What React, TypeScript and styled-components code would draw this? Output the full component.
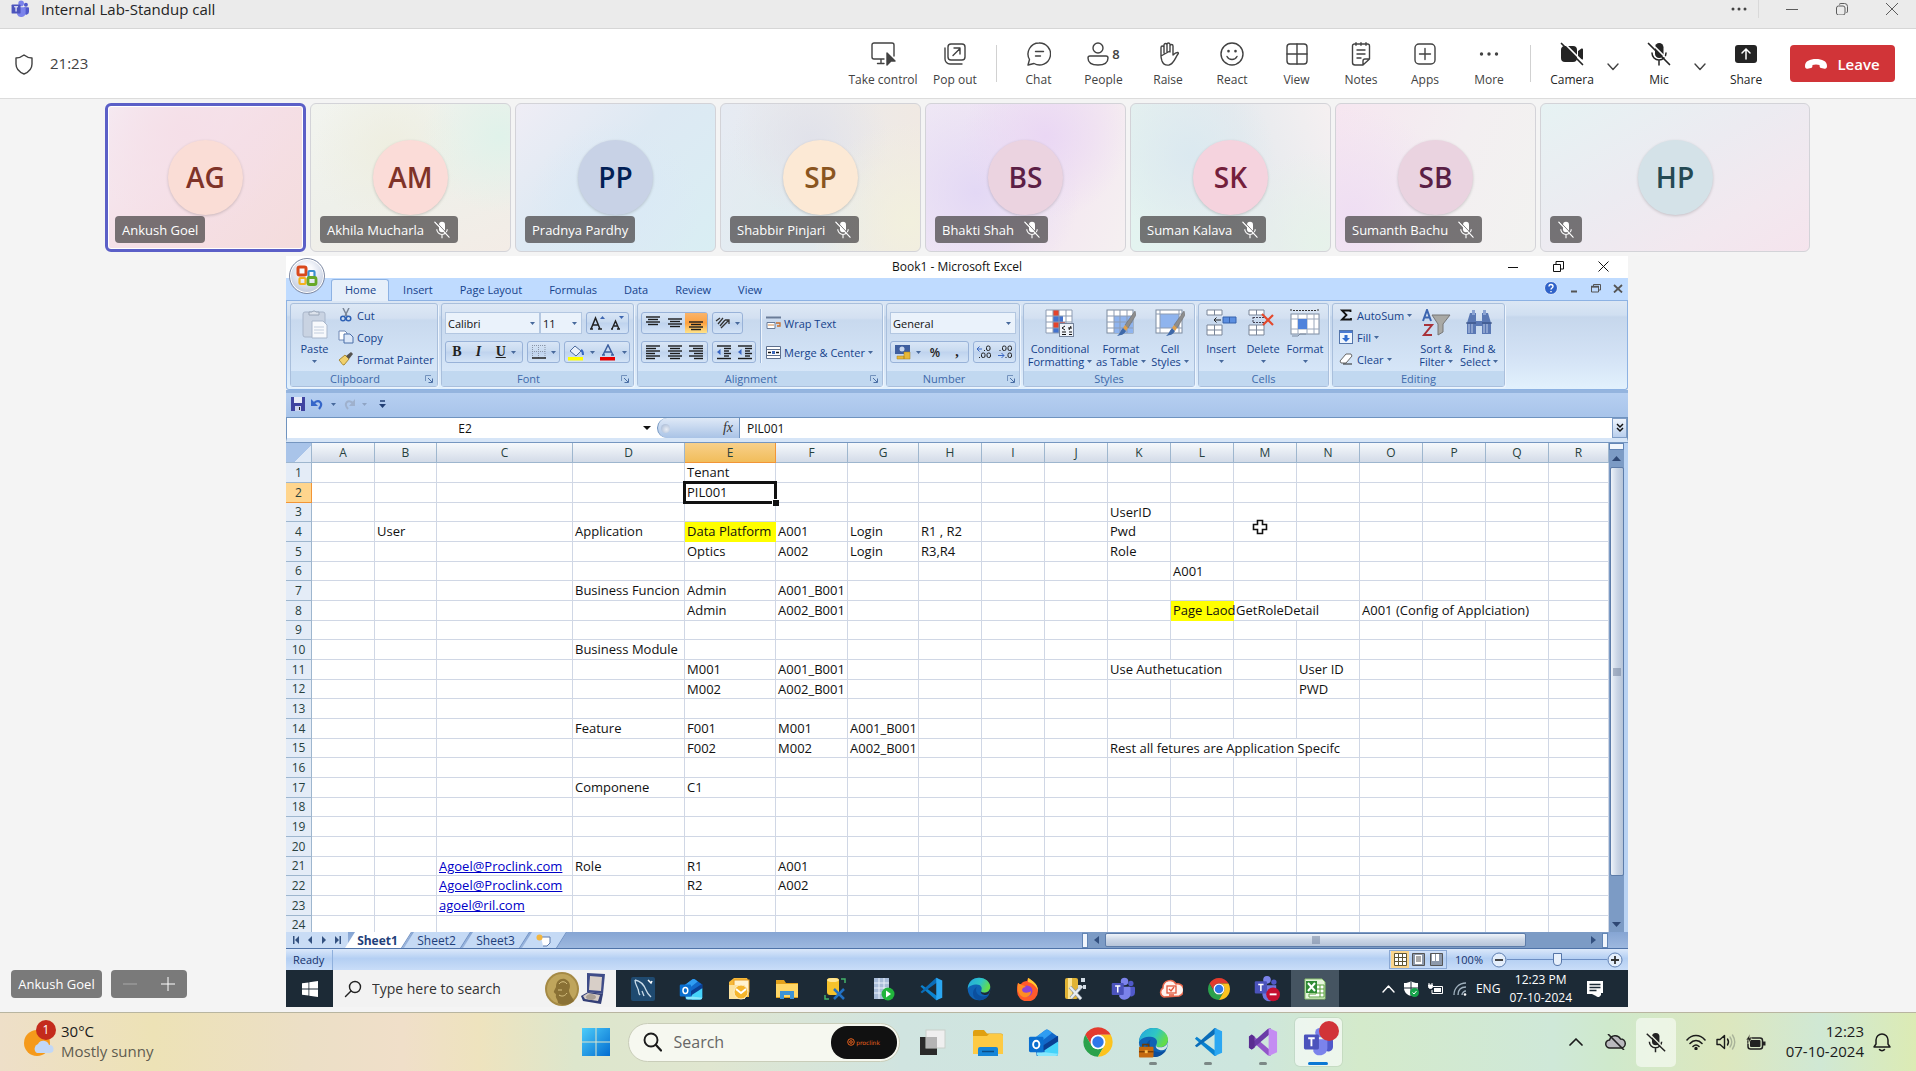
import React from "react";
import styled, { createGlobalStyle, css } from "styled-components";

const ui = `"Open Sans", "Noto Sans", sans-serif`;

const GlobalStyle = createGlobalStyle`
  * { box-sizing: border-box; }
  body { margin: 0; background: #f4f4f4; font-family: ${ui}; color: #242424; }
  button { font: inherit; color: inherit; background: none; border: 0; padding: 0; cursor: pointer; }
  input, select { font: inherit; color: inherit; border: 0; padding: 0; margin: 0; outline: none; }
  svg { display: block; flex: none; }
`;

/* ---------- helpers ---------- */

type IconProps = { w?: number; h?: number; box?: string; children: React.ReactNode };

const Svg = ({ w = 24, h, box = "0 0 24 24", children }: IconProps) => (
  <svg width={w} height={h ?? w} viewBox={box} fill="none" aria-hidden="true">
    {children}
  </svg>
);

const Line = ({ w = 24, h, box, children }: IconProps) => (
  <Svg w={w} h={h} box={box}>
    <g stroke="currentColor" strokeWidth="1.4" strokeLinecap="round" strokeLinejoin="round">
      {children}
    </g>
  </Svg>
);

/* ---------- application logos ---------- */

const TeamsLogo = ({ size }: { size: number }) => (
  <Svg w={size} box="0 0 32 32">
    <circle cx="26.5" cy="8.5" r="3.5" fill="#5059c9" />
    <circle cx="18" cy="6" r="5" fill="#7b83eb" />
    <path d="M23 13h7.500a1.500 1.500 0 0 1 1.500 1.500V21a5 5 0 0 1-9 3z" fill="#5059c9" />
    <path d="M11 13h13.500a1.500 1.500 0 0 1 1.500 1.500V23a8 8 0 0 1-15 3z" fill="#7b83eb" />
    <rect x="1" y="8" width="16" height="16" rx="1.500" fill="#4b53bc" />
    <path d="M5.500 12h7M9 12v8.500" stroke="#fff" strokeWidth="2" />
  </Svg>
);

const OutlookLogo = ({ size }: { size: number }) => (
  <Svg w={size} box="0 0 32 32">
    <path d="M6 12 18 3q1.500-1 3 0l10 7v17a3 3 0 0 1-3 3H9z" fill="#1268c9" />
    <path d="M6 12 18 3q1.500-1 3 0l4 3-14 11z" fill="#2f9df2" />
    <path d="M14 20 31 9v7L17 26z" fill="#0a3f94" />
    <path d="M31 15 17 24v6h11a3 3 0 0 0 3-3z" fill="#45d3fa" />
    <path d="M9 26h8l14 1.500a3 3 0 0 1-3 2.500H12a3 3 0 0 1-3-3z" fill="#86e7fd" />
    <rect x="1" y="10" width="15" height="16" rx="1.500" fill="#0a6fd0" />
    <ellipse cx="8.500" cy="18" rx="3.200" ry="3.900" stroke="#fff" strokeWidth="2" />
  </Svg>
);

const ChromeLogo = ({ size }: { size: number }) => (
  <Svg w={size} box="0 0 48 48">
    <path d="M4.950 13A22 22 0 0 1 43.050 13H24a11 11 0 0 0-9.500 16.500z" fill="#e33b2e" />
    <path d="M4.950 13 14.500 29.500a11 11 0 0 0 19 0L24 46A22 22 0 0 1 4.950 13z" fill="#2ba24c" />
    <path d="M43.050 13A22 22 0 0 1 24 46l9.500-16.500A11 11 0 0 0 24 13z" fill="#fcc31e" />
    <circle cx="24" cy="24" r="11" fill="#fff" />
    <circle cx="24" cy="24" r="8.500" fill="#2f77ea" />
  </Svg>
);

const EdgeLogo = ({ size, bag }: { size: number; bag?: boolean }) => (
  <Svg w={size} box="0 0 32 32">
    <defs>
      <linearGradient id="edgeTop" x1="0" y1="0" x2="1" y2="0.400">
        <stop offset="0" stopColor="#23a5e0" />
        <stop offset="0.600" stopColor="#2fc6c4" />
        <stop offset="1" stopColor="#63dc4b" />
      </linearGradient>
    </defs>
    <circle cx="16" cy="16" r="15" fill="#0f62b4" />
    <path d="M1 16C1 7 8 1 16 1c9 0 15 6 15 12 0 5-4 8-8 8-3 0-5-1-4-3 2-4-1-8-6-8C7 10 2 12 1 16z" fill="url(#edgeTop)" />
    <path d="M13 13c-3 6 1 13 9 13 3 0 5-1 7-2-3 5-8 7-13 7-9-1-11-13-3-18z" fill="#0b4f9e" />
    <path d="M19 18c-1 2 1 3 4 3 4 0 7-2 8-6 0 5-2 9-6 9-5 0-8-3-6-6z" fill={bag ? "#d3e6e4" : "#1c2a36"} />
    {bag && (
      <>
        <path d="M5 21v-3h6v3" stroke="#6d3b05" strokeWidth="1.500" />
        <rect x="1" y="20.500" width="15" height="11" rx="1" fill="#c56a10" />
        <path d="M1 25.500h15" stroke="#7b3f08" strokeWidth="1.500" />
        <rect x="7" y="24" width="3" height="3" fill="#ffc04d" />
      </>
    )}
  </Svg>
);

const CodeLogo = ({ size }: { size: number }) => (
  <Svg w={size} box="0 0 32 32">
    <path d="M2 12.500 4 10.500 25 26v4.500L23 31z" fill="#0b83d0" />
    <path d="M2 20 4 21.500 25 6.500V1.500L23 1z" fill="#0a6cb8" />
    <path d="m23 1 8 3.500v23L23 31z" fill="#2ba7f2" />
  </Svg>
);

const VisualStudioLogo = ({ size }: { size: number }) => (
  <Svg w={size} box="0 0 32 32">
    <path d="M1 10 4 8l20 17v6l-3-1L1 12z" fill="#9256c9" />
    <path d="M1 22 4 24 24 7V1l-3 1L1 20z" fill="#6a3ba7" />
    <path d="M1 10 4 8l3 2v12l-3 2-3-2z" fill="#5a2d91" />
    <path d="m22 1 9 4v22l-9 4z" fill="#c48cf2" />
  </Svg>
);

const FolderLogo = ({ size }: { size: number }) => (
  <Svg w={size} box="0 0 32 32">
    <path d="M1 6a2 2 0 0 1 2-2h9l3 3.500h14a2 2 0 0 1 2 2V15H1z" fill="#e0a010" />
    <path d="M1 10h14l2-2h12a2 2 0 0 1 2 2v18H1z" fill="#fdca44" />
    <path d="M6 30v-7a2 2 0 0 1 2-2h16a2 2 0 0 1 2 2v7z" fill="#1585d8" />
    <path d="M10 25.500h12" stroke="#0b4d87" strokeWidth="1.500" />
  </Svg>
);

const SmallFolder = () => (
  <Svg w={24} box="0 0 24 24">
    <path d="M1 3h8l2 3h12v15H1z" fill="#e3a21c" />
    <path d="M1 7h22v13H1z" fill="#ffd767" />
    <path d="M5 22v-8h14v8h-4v-4H9v4z" fill="#3d93d6" />
  </Svg>
);

const MySqlLogo = () => (
  <Svg w={24} box="0 0 24 24">
    <rect width="24" height="24" rx="2" fill="#1f4a70" />
    <path d="M4 3c6 1 9 5 11 10 1 3 3 5 5 7M4 3c0 4 2 6 3 9 1 2 0 4 2 6M11 14l2 5" stroke="#c9dbe8" strokeWidth="1.300" />
    <path d="m17 3 3 3 1-2" stroke="#fff" strokeWidth="1.500" />
  </Svg>
);

const MailClockLogo = () => (
  <Svg w={24} box="0 0 24 24">
    <path d="M2 5 7 1h13l2 4v15H2z" fill="#f6b93a" />
    <rect x="7" y="3" width="15" height="12" fill="#fff3d0" stroke="#e79c1f" />
    <path d="M2 8h16v14H2z" fill="#fce3a0" />
    <circle cx="14" cy="15" r="7" fill="#f5b52c" stroke="#fff0c8" />
    <path d="m9 12 5 4 5-4" stroke="#fff" strokeWidth="2" />
  </Svg>
);

const DbToolLogo = () => (
  <Svg w={24} box="0 0 24 24">
    <rect x="4" y="1" width="12" height="17" rx="3" fill="#f6c22c" />
    <ellipse cx="10" cy="3" rx="6" ry="2" fill="#ffe694" />
    <path d="M18 2h4v4M2 18v4h4" stroke="#43b36a" strokeWidth="1.500" />
    <path d="m11 12 10 10M21 12 11 22" stroke="#2271c4" strokeWidth="2.500" />
  </Svg>
);

const ServerPlayLogo = () => (
  <Svg w={24} box="0 0 24 24">
    <rect x="3" y="1" width="15" height="21" fill="#a8bcd8" />
    <path d="M3 6h15M3 11h15M3 16h15M8 1v21M13 1v21" stroke="#eaf1fa" />
    <circle cx="17" cy="17" r="6.500" fill="#21b53c" />
    <path d="m15 13.500 5 3.500-5 3.500z" fill="#fff" />
  </Svg>
);

const FirefoxLogo = () => (
  <Svg w={24} box="0 0 24 24">
    <path d="M3 6c1 1 2 1 3 1 1-2 4-3 6-3l1-3c4 2 10 6 10 13a10.500 10.500 0 0 1-21 0c0-3 0-5 1-8z" fill="#ff5a2c" />
    <path d="M13 1c4 2 10 6 10 13-1-4-5-8-10-9z" fill="#ffcc2f" />
    <circle cx="12" cy="14" r="5.500" fill="#8d41d8" />
    <path d="M3 6c2 2 6 2 8 4-2 0-4 1-4 3 1 4 7 3 9 1 0 5-4 7-8 6-5-2-6-8-5-14z" fill="#ff8d24" />
  </Svg>
);

const DbWrenchLogo = () => (
  <Svg w={24} box="0 0 24 24">
    <rect x="2" y="1" width="13" height="21" rx="2" fill="#e0b335" />
    <rect x="5" y="1" width="4" height="21" fill="#fbe391" />
    <path d="m7 10 11 12M19 9 8 21" stroke="#8d9aa8" strokeWidth="3.500" />
    <path d="m7 10 11 12M19 9 8 21" stroke="#e8edf2" strokeWidth="2.200" />
    <path d="M18 1h4v4h-4zM15 8h3v4h-3zM20 8h3v4h-3z" fill="#d3dde6" />
  </Svg>
);

const CloudCheckLogo = () => (
  <Svg w={24} box="0 0 24 24">
    <path d="M5 20a5 5 0 0 1-1-9 7 7 0 0 1 13-4 6 6 0 0 1 3 12z" fill="#fff4f0" stroke="#e7674c" strokeWidth="1.500" />
    <rect x="8" y="9" width="9" height="7" stroke="#e0563b" strokeWidth="1.300" />
    <path d="m10 12 2 2 3-4M10 18h5" stroke="#e0563b" strokeWidth="1.300" />
  </Svg>
);

const TeamsBusyLogo = () => (
  <Svg w={26} box="0 0 34 34">
    <circle cx="26" cy="8" r="3.500" fill="#5059c9" />
    <circle cx="17" cy="5" r="5" fill="#7b83eb" />
    <path d="M11 12h18v11a8 8 0 0 1-18 2z" fill="#6f77de" />
    <rect x="1" y="7" width="16" height="16" rx="1.500" fill="#4b53bc" />
    <path d="M5.500 11h7M9 11v8.500" stroke="#fff" strokeWidth="2" />
    <circle cx="25" cy="24" r="9" fill="#c50f2f" />
    <path d="M20.500 24h9" stroke="#fff" strokeWidth="2.500" />
  </Svg>
);

const ExcelLogo = () => (
  <Svg w={24} box="0 0 24 24">
    <path d="M2 2h17l3 3v17H2z" fill="#e5f4dc" stroke="#8cc56f" />
    <path d="M13 8h8v12H6v-3h7z" fill="#fff" stroke="#5aa23f" />
    <path d="M13 12h8M13 16h8M17 8v12" stroke="#5aa23f" />
    <rect x="3" y="4" width="11" height="12" fill="#2f8b35" />
    <path d="m5 6 7 8M12 6l-7 8" stroke="#fff" strokeWidth="2" />
  </Svg>
);

const WindowsTen = () => (
  <Svg w={16} box="0 0 16 16">
    <path d="M0 2.300 6.500 1.400v6.200H0zM7.300 1.300 16 0v7.600H7.300zM0 8.400h6.500v6.200L0 13.700zM7.300 8.400H16V16l-8.700-1.300z" fill="#fff" />
  </Svg>
);

const WindowsEleven = () => (
  <Svg w={30} box="0 0 30 30">
    <defs>
      <linearGradient id="winBlue" x1="0" y1="0" x2="30" y2="30" gradientUnits="userSpaceOnUse">
        <stop offset="0" stopColor="#4fd0fb" />
        <stop offset="1" stopColor="#0069cf" />
      </linearGradient>
    </defs>
    <path d="M1 1h13.500v13.500H1zM15.500 1H29v13.500H15.500zM1 15.500h13.500V29H1zM15.500 15.500H29V29H15.500z" fill="url(#winBlue)" />
  </Svg>
);

/* ---------- call window: title and toolbar ---------- */

const Page = styled.div`
  display: flex;
  flex-direction: column;
  min-height: 100vh;
`;

const TitleBar = styled.header`
  display: flex;
  align-items: center;
  height: 29px;
  padding: 0 18px 10px 11px;
  gap: 12px;
  background: #ebebeb;
  border-bottom: 1px solid #d6d6d6;
  font-size: 15px;
  line-height: 18px;
  h1 { flex: 1; margin: 0; font-size: 15px; font-weight: 400; }
`;

const WindowButtons = styled.div<{ $gap: number }>`
  display: flex;
  align-items: center;
  gap: ${(p) => p.$gap}px;
  color: #5c5c5c;
`;

const TitleRule = styled.span`
  width: 1px;
  height: 18px;
  margin: 0 -11px 0 -28px;
  background: #d9d9d9;
`;

const CallBar = styled.div`
  display: flex;
  align-items: center;
  height: 70px;
  padding: 0 21px 0 14px;
  background: #fff;
  border-bottom: 1px solid #dcdcdc;
  color: #424242;
`;

const Timer = styled.time`
  flex: 1;
  margin-left: 16px;
  padding-bottom: 2px;
  font-size: 15px;
`;

const ToolButton = styled.button<{ $w?: number; $dark?: boolean }>`
  display: flex;
  flex-direction: column;
  align-items: center;
  gap: 6px;
  width: ${(p) => p.$w ?? 64}px;
  padding-top: 2px;
  font-size: 12px;
  line-height: 16px;
  white-space: nowrap;
  color: ${(p) => (p.$dark ? "#242424" : "#424242")};
  sup { margin-left: 3px; font-size: 13px; line-height: 24px; font-weight: 600; vertical-align: top; }
  span { display: flex; }
`;

const ChevronButton = styled.button`
  display: flex;
  justify-content: center;
  width: 18px;
  margin-right: 5px;
  color: #424242;
`;

const BarRule = styled.span`
  width: 1px;
  height: 37px;
  margin: 0 9px;
  background: #d1d1d1;
`;

const LeaveButton = styled.button`
  display: flex;
  align-items: center;
  justify-content: center;
  gap: 10px;
  width: 105px;
  height: 37px;
  margin-left: 12px;
  border-radius: 4px;
  background: #d13438;
  color: #fff;
  font-size: 15px;
  font-weight: 600;
`;

const icons = {
  control: (
    <Line w={26} h={24} box="0 0 26 24">
      <path d="M14 17H4a2 2 0 0 1-2-2V3a2 2 0 0 1 2-2h18a2 2 0 0 1 2 2v11M11 17v4M7.500 21.500H14" />
      <path d="m17 11 8 8h-4l-4 4z" fill="currentColor" />
    </Line>
  ),
  popOut: (
    <Line>
      <rect x="5" y="2" width="17" height="16" rx="3" />
      <path d="M2 6v11a5 5 0 0 0 5 5h12M10 13.500l7-7M11 6h6v6" />
    </Line>
  ),
  chat: (
    <Line>
      <path d="M12 1a11 11 0 1 1-5 20.500L1 23l1.500-5.500A11 11 0 0 1 12 1zM8.500 9.500h8M8.500 14h5" />
    </Line>
  ),
  person: (
    <Line w={22} h={24} box="0 0 22 24">
      <circle cx="11" cy="6" r="5" />
      <path d="M3 14h16a2 2 0 0 1 2 2c0 5-4 7-10 7S1 21 1 16a2 2 0 0 1 2-2z" />
    </Line>
  ),
  hand: (
    <Line>
      <path d="M5 14V5.500a1.500 1.500 0 0 1 3 0V11M8 9V3a1.500 1.500 0 0 1 3 0v7M11 9V2.500a1.500 1.500 0 0 1 3 0V10M14 9V4a1.500 1.500 0 0 1 3 0v9c2-2 3-3 5-2.500.500.300.500 1 0 1.500-3 4-4 10-9 11-4 .500-6-1-7-4-.500-2-1-3-1-5z" />
    </Line>
  ),
  smile: (
    <Line>
      <circle cx="12" cy="12" r="11" />
      <path d="M7 14.500c2 4 8 4 10 0" />
      <path d="M8.500 9v.300M15.500 9v.300" strokeWidth="2.600" />
    </Line>
  ),
  view: (
    <Line>
      <rect x="2" y="2" width="20" height="20" rx="3" />
      <path d="M12 2v20M2 12h20" />
    </Line>
  ),
  notes: (
    <Line>
      <path d="M14 23H6a2.500 2.500 0 0 1-2.500-2.500V4A2 2 0 0 1 5.500 2h13a2 2 0 0 1 2 2v13zM14 23v-4a2 2 0 0 1 2-2h4.500M7 .800v2.400M12 .800v2.400M17 .800v2.400M8 8h8M8 12h8M8 16h4" />
    </Line>
  ),
  apps: (
    <Line>
      <rect x="2" y="2" width="20" height="20" rx="4" />
      <path d="M12 6.500v11M6.500 12h11" />
    </Line>
  ),
  more: (
    <Svg>
      <g fill="currentColor">
        <circle cx="4.500" cy="12" r="1.700" />
        <circle cx="12" cy="12" r="1.700" />
        <circle cx="19.500" cy="12" r="1.700" />
      </g>
    </Svg>
  ),
  camera: (
    <Svg>
      <path d="M4 4h9a4 4 0 0 1 4 4v8a4 4 0 0 1-4 4H5a4 4 0 0 1-4-4V8a4 4 0 0 1 3-4zM18 9l3.500-2.500q1.500-.500 1.500 1v9q0 1.500-1.500 1L18 15z" fill="currentColor" />
      <path d="m3 0 21 21" stroke="#fff" strokeWidth="1.600" />
      <path d="m1.500 1.500 21 21" stroke="currentColor" strokeWidth="1.700" strokeLinecap="round" />
    </Svg>
  ),
  mic: (
    <Svg>
      <rect x="8" y="1" width="8.500" height="15" rx="4.250" fill="currentColor" />
      <path d="M5 11a7 7 0 0 0 14 0M12 18.500V23" stroke="currentColor" strokeWidth="1.500" strokeLinecap="round" />
      <path d="m3 0 21 21" stroke="#fff" strokeWidth="1.600" />
      <path d="m1.500 1.500 21 21" stroke="currentColor" strokeWidth="1.700" strokeLinecap="round" />
    </Svg>
  ),
  share: (
    <Svg>
      <rect x="1" y="3" width="22" height="18" rx="3" fill="currentColor" />
      <path d="M12 17V7.500M8 11l4-4 4 4" stroke="#fff" strokeWidth="1.500" strokeLinecap="round" />
    </Svg>
  ),
};

const Chevron = () => (
  <Line w={12} h={20} box="0 0 12 20">
    <path d="m1 10 5 5.500L11 10" />
  </Line>
);

const CallToolbar = () => (
  <CallBar>
    <Line w={20} h={22} box="0 0 20 22">
      <path d="M10 2c2.500 2 5 3 8 3v6c0 5-3 8-8 10-5-2-8-5-8-10V5c3 0 5.500-1 8-3z" />
    </Line>
    <Timer>21:23</Timer>
    <ToolButton $w={80}>{icons.control}Take control</ToolButton>
    <ToolButton>{icons.popOut}Pop out</ToolButton>
    <BarRule />
    <ToolButton $w={65}>{icons.chat}Chat</ToolButton>
    <ToolButton $w={65}><span>{icons.person}<sup>8</sup></span>People</ToolButton>
    <ToolButton>{icons.hand}Raise</ToolButton>
    <ToolButton>{icons.smile}React</ToolButton>
    <ToolButton $w={65}>{icons.view}View</ToolButton>
    <ToolButton>{icons.notes}Notes</ToolButton>
    <ToolButton>{icons.apps}Apps</ToolButton>
    <ToolButton>{icons.more}More</ToolButton>
    <BarRule />
    <ToolButton $dark>{icons.camera}Camera</ToolButton>
    <ChevronButton aria-label="Camera options"><Chevron /></ChevronButton>
    <ToolButton $dark>{icons.mic}Mic</ToolButton>
    <ChevronButton aria-label="Mic options"><Chevron /></ChevronButton>
    <ToolButton $dark>{icons.share}Share</ToolButton>
    <LeaveButton>
      <Svg w={22} h={12} box="0 0 22 12">
        <path d="M0 8C0 3 5 1 11 1s11 2 11 7c0 2-1 3-2.500 2.700L16 10c-1-.300-1.500-1-1.500-3-2-.800-5-.800-7 0C7.500 9 7 9.700 6 10l-3.500.700C1 11 0 10 0 8z" fill="#fff" />
      </Svg>
      Leave
    </LeaveButton>
  </CallBar>
);

/* ---------- participants ---------- */

const Gallery = styled.section`
  display: flex;
  justify-content: center;
  gap: 4px;
  padding: 4px 1px 4px 0;
`;

const Tile = styled.article<{ $wide?: boolean; $active?: boolean; $bg: string }>`
  display: grid;
  place-items: center;
  position: relative;
  width: ${(p) => (p.$wide ? 270 : 201)}px;
  height: 149px;
  border: ${(p) => (p.$active ? "3px solid #5b5fc7" : "1px solid #d3d3d8")};
  border-radius: 6px;
  background: ${(p) => p.$bg};
  ${(p) => p.$active && css`box-shadow: inset 0 0 0 1px #fff;`}
`;

const Avatar = styled.span<{ $bg: string; $fg: string }>`
  display: grid;
  place-items: center;
  width: 75px;
  height: 75px;
  padding-bottom: 2px;
  border-radius: 50%;
  background: ${(p) => p.$bg};
  color: ${(p) => p.$fg};
  font-size: 28px;
  font-weight: 600;
  box-shadow: 0 1px 3px rgba(0, 0, 0, 0.18);
`;

const NameTag = styled.span<{ $active?: boolean }>`
  display: flex;
  align-items: center;
  gap: 9px;
  position: absolute;
  left: ${(p) => (p.$active ? 7 : 9)}px;
  bottom: ${(p) => (p.$active ? 6 : 8)}px;
  height: 27px;
  padding: 0 7px;
  border-radius: 4px;
  background: rgba(74, 72, 73, 0.74);
  color: #fff;
  font-size: 13px;
  font-weight: 500;
  white-space: nowrap;
`;

const TagMic = () => (
  <Svg w={18} h={18} box="0 0 24 24">
    <rect x="8" y="1" width="8" height="14" rx="4" fill="#fff" />
    <path d="M5 11a7 7 0 0 0 14 0M12 18v5" stroke="#fff" strokeWidth="1.500" />
    <path d="m2 1 20 21" stroke="#fff" strokeWidth="1.500" />
    <path d="m3.500 .500 20 21" stroke="#737173" strokeWidth="1.200" />
  </Svg>
);

const people = [
  { id: "AG", name: "Ankush Goel", fg: "#7f3328", av: "#faddd6", bg: "radial-gradient(circle at 40% 20%, #f5dfe8, transparent 60%), linear-gradient(135deg, #f5ebf3, #f5dfe6 50%, #f4dcdc)", active: true },
  { id: "AM", name: "Akhila Mucharla", muted: true, fg: "#7f3328", av: "#fbdcd8", bg: "radial-gradient(circle at 95% 22%, #e0f2ea, transparent 35%), radial-gradient(circle at 40% 32%, #eeeee0, transparent 50%), linear-gradient(160deg, #f2f4ef, #eef0ea 50%, #f3ece6)" },
  { id: "PP", name: "Pradnya Pardhy", fg: "#021f56", av: "#c8d2e6", bg: "radial-gradient(circle at 50% 70%, #dae9f6, transparent 60%), linear-gradient(135deg, #efedf5, #dde9f3 45%, #d9eef3)" },
  { id: "SP", name: "Shabbir Pinjari", muted: true, fg: "#8a551f", av: "#fce9d5", bg: "radial-gradient(circle at 95% 80%, #f2f0de, transparent 45%), radial-gradient(circle at 45% 25%, #e1e2ea, transparent 50%), radial-gradient(circle at 30% 80%, #e0ecf0, transparent 60%), linear-gradient(90deg, #e6ebf3, #f0e9e3)" },
  { id: "BS", name: "Bhakti Shah", muted: true, fg: "#5c1f46", av: "#ebd3e0", bg: "radial-gradient(circle at 60% 22%, #ead7f4, transparent 50%), radial-gradient(circle at 25% 60%, #e3d8f5, transparent 60%), linear-gradient(110deg, #efe8f5, #f4e9f1 70%, #f5f0f1)" },
  { id: "SK", name: "Suman Kalava", muted: true, fg: "#741f3c", av: "#f5d3de", bg: "radial-gradient(circle at 95% 95%, #e6f2ea, transparent 40%), radial-gradient(circle at 30% 35%, #dbe9f0, transparent 50%), linear-gradient(70deg, #e3f4f0, #e6eaee 60%, #f5f0f1)" },
  { id: "SB", name: "Sumanth Bachu", muted: true, fg: "#5a1f46", av: "#ead3e0", bg: "radial-gradient(circle at 8% 75%, #efdef3, transparent 50%), linear-gradient(110deg, #f6e6f0, #f3eff1 55%, #f2f2f0)" },
  { id: "HP", name: "", muted: true, wide: true, fg: "#244a54", av: "#d4e2e8", bg: "linear-gradient(150deg, #e6f2f3, #ecebf1 45%, #f2e8ef 75%, #f5e4ed)" },
];

const Participants = () => (
  <Gallery aria-label="Participants">
    {people.map((p) => (
      <Tile key={p.id} $bg={p.bg} $active={p.active} $wide={p.wide}>
        <Avatar $bg={p.av} $fg={p.fg}>{p.id}</Avatar>
        <NameTag $active={p.active}>
          {p.name}
          {p.muted && <TagMic />}
        </NameTag>
      </Tile>
    ))}
  </Gallery>
);

/* ---------- shared spreadsheet window ---------- */

const Stage = styled.main`
  display: flex;
  flex: 1;
  align-items: flex-start;
  position: relative;
  padding: 0 288px 5px 286px;
`;

const Presenter = styled.div`
  display: flex;
  gap: 9px;
  position: absolute;
  left: 11px;
  bottom: 14px;
`;

const PresenterPill = styled.div<{ $w: number }>`
  display: flex;
  align-items: center;
  justify-content: space-around;
  width: ${(p) => p.$w}px;
  height: 28px;
  border-radius: 4px;
  background: #7a7a7a;
  color: #fff;
  font-size: 13px;
  font-weight: 500;
`;

const Shared = styled.section`
  flex: 1;
  min-width: 0;
  font-size: 11px;
  color: #15428b;
`;

const BookTitle = styled.div`
  display: grid;
  grid-template-columns: 1fr auto 1fr;
  align-items: center;
  position: relative;
  height: 22px;
  padding-bottom: 2px;
  background: #fff;
  color: #111;
  font-size: 12px;
  > *:last-child { justify-self: end; margin-right: 19px; color: #111; }
`;

const OfficeButton = styled.button`
  display: grid;
  place-items: center;
  position: absolute;
  left: 3px;
  top: 2px;
  z-index: 2;
  width: 36px;
  height: 36px;
  border-radius: 50%;
  border: 1px solid #7f8aa3;
  background: radial-gradient(circle at 50% 35%, #f9fafd 20%, #d2d9e8 60%, #aab7d0);
  box-shadow: inset 0 0 0 1px #fff;
`;

const TabStrip = styled.nav`
  display: flex;
  align-items: flex-end;
  height: 23px;
  padding: 0 5px 0 45px;
  background: #bfdbff;
  border-bottom: 1px solid #8db2e3;
`;

const RibbonTab = styled.button<{ $on?: boolean }>`
  height: 22px;
  margin-bottom: -1px;
  padding: 0 12px 2px 13px;
  border: 1px solid transparent;
  border-bottom: 0;
  border-radius: 3px 3px 0 0;
  color: #15428b;
  ${(p) => p.$on && css`background: #e6effa; border-color: #8db2e3;`}
`;

const StripTools = styled.div`
  display: flex;
  align-items: center;
  gap: 12px;
  height: 22px;
  padding-bottom: 2px;
  margin-left: auto;
`;

const Ribbon = styled.div`
  display: flex;
  gap: 3px;
  height: 89px;
  padding: 2px 3px 3px;
  border: 1px solid #8db2e3;
  border-top: 0;
  border-radius: 0 0 3px 3px;
  background: linear-gradient(#dbe6f4 0, #d0dff1 14px, #c6d7ec 16px, #d3e2f5 55px, #e2f1fd 88px);
`;

const Group = styled.section<{ $w: number }>`
  display: flex;
  flex-direction: column;
  flex: none;
  width: ${(p) => p.$w}px;
  height: 84px;
  border: 1px solid #a9bfdc;
  border-radius: 3px;
  background: linear-gradient(#dde8f5 0, #d3e0f1 14px, #c8d9ee 16px, #d6e6f8 68px);
  box-shadow: 1px 1px 0 #eef5fd;
`;

const GroupBody = styled.div<{ $pad?: string; $gap?: number }>`
  display: flex;
  flex: 1;
  min-height: 0;
  gap: ${(p) => p.$gap ?? 0}px;
  padding: ${(p) => p.$pad ?? "0"};
`;

const GroupLabel = styled.footer`
  display: flex;
  align-items: center;
  height: 15px;
  background: #c1d8f0;
  color: #3e6aaa;
  line-height: 15px;
  > span { flex: 1; text-align: center; }
  > svg { margin: 0 4px 0 6px; }
`;

const Column = styled.div<{ $gap?: number }>`
  display: flex;
  flex-direction: column;
  gap: ${(p) => p.$gap ?? 0}px;
`;

const Row = styled.div<{ $gap?: number }>`
  display: flex;
  gap: ${(p) => p.$gap ?? 4}px;
`;

const SmallCommand = styled.button`
  display: flex;
  align-items: center;
  gap: 3px;
  height: 22px;
  white-space: nowrap;
  color: #15428b;
`;

const BigCommand = styled.button<{ $w: number }>`
  display: flex;
  flex-direction: column;
  align-items: center;
  width: ${(p) => p.$w}px;
  padding-top: 5px;
  line-height: 13px;
  white-space: nowrap;
  color: #15428b;
  > svg:first-child { margin-bottom: 3px; }
  > span { display: flex; align-items: center; gap: 3px; min-height: 13px; }
`;

const Cluster = styled.div<{ $w: number }>`
  display: flex;
  align-items: center;
  width: ${(p) => p.$w}px;
  height: 22px;
  border: 1px solid #98b2d8;
  border-radius: 3px;
  background: linear-gradient(#d9e6f6, #c8daf0 45%, #bfd3ee 50%, #d3e3f6);
`;

const Key = styled.button<{ $on?: boolean; $drop?: boolean }>`
  display: flex;
  flex: ${(p) => (p.$drop ? "3 1 0" : "2 1 0")};
  align-items: center;
  justify-content: center;
  gap: 5px;
  height: 20px;
  color: #222;
  font-size: 12px;
  font-weight: 600;
  ${(p) => p.$on && css`background: linear-gradient(#f9b46b, #fda13f 50%, #fee48a);`}
  b, i, u { font-family: "Liberation Serif", serif; font-size: 14px; font-weight: 700; }
`;

const Picker = styled.div<{ $w: number }>`
  display: flex;
  align-items: center;
  position: relative;
  width: ${(p) => p.$w}px;
  height: 22px;
  background: #eaf2fb;
  border: 1px solid #b3c7e1;
  select {
    appearance: none;
    width: 100%;
    height: 20px;
    padding-left: 2px;
    background: transparent;
    color: #111;
    font-size: 11px;
  }
  svg { position: absolute; right: 4px; pointer-events: none; }
`;

const Divider = styled.span`
  width: 2px;
  height: 54px;
  margin-top: -3px;
  border-left: 1px solid #9db6d8;
  background: #eef5fd;
`;

const Caret = ({ color = "#47699c" }: { color?: string }) => (
  <Svg w={5} h={3} box="0 0 5 3"><path d="M0 0h5L2.500 3z" fill={color} /></Svg>
);

const Launcher = () => (
  <Svg w={8} h={8} box="0 0 8 8">
    <path d="M.500 6V.500H6" stroke="#7392bd" />
    <path d="m3 3 4 4M7.500 3.500v4h-4" stroke="#4a6ea4" />
  </Svg>
);

const RibbonGroup = ({ label, w, launcher, pad, gap, children }: { label: string; w: number; launcher?: boolean; pad?: string; gap?: number; children: React.ReactNode }) => (
  <Group $w={w} aria-label={label}>
    <GroupBody $pad={pad} $gap={gap}>{children}</GroupBody>
    <GroupLabel><span>{label}</span>{launcher && <Launcher />}</GroupLabel>
  </Group>
);

const Bars = ({ rows, top = 2, accent }: { rows: number[][]; top?: number; accent?: boolean }) => (
  <Svg w={16} h={16} box="0 0 16 16">
    {rows.map(([x, len], i) => (
      <path key={i} d={`M${x} ${top + i * 2.5}h${len}`} stroke="#1c1c1c" strokeWidth="1.400" />
    ))}
    {accent && <path d="M4.500 5 1 8l3.500 3z" fill="#3a66c2" />}
  </Svg>
);

const GridIcon = ({ fill, inner }: { fill: string; inner?: boolean }) => (
  <Svg w={30} h={30} box="0 0 30 30">
    <rect x="1" y="1" width="26" height="23" fill="#fff" stroke="#7d8ba0" />
    {inner ? <rect x="5" y="5" width="19" height="14" fill={fill} /> : <path d="M8 7h19v17H8z" fill={fill} />}
    <path d={inner ? "M5 1v23M24 1v23M1 5h26M1 19h26" : "M8 1v23M14 1v23M21 1v23M1 7h26M1 13h26M1 19h26"} stroke="#8d9cb3" />
    <path d="M29 2 19 16l3 3 8-13z" fill="#8d8d8d" stroke="#666" strokeWidth="0.500" />
    <path d="m19 16 3 3-2 3-3-3z" fill="#e0a04c" />
    <path d="m17 19 3 3c-2 4-5 4-9 5 3-2 3-5 6-8z" fill="#3e68a8" />
  </Svg>
);

const CellsIcon = ({ kind }: { kind: "insert" | "delete" }) => (
  <Svg w={32} h={30} box="0 0 32 30">
    <path d="M2 1h15v5H2zM9.500 1v5M2 16h15v10H2zM2 21h15M9.500 16v10" fill="#fff" stroke="#7a8699" />
    {kind === "insert" ? (
      <>
        <path d="M18 8h13v6H18zM24.500 8v6" fill="#5b8ee0" stroke="#3762ad" />
        <path d="M16 11H9M11.500 8.500 9 11l2.500 2.500" stroke="#222" />
      </>
    ) : (
      <>
        <path d="M6 8.500h13M6 13.500h13M6 8v6" stroke="#445" strokeDasharray="2 1" />
        <path d="m15 5 11 11M26 6 16 16" stroke="#e4492c" strokeWidth="2.200" />
      </>
    )}
  </Svg>
);

const RibbonBar = () => (
  <Ribbon>
    <RibbonGroup label="Clipboard" w={148} launcher>
      <BigCommand $w={47}>
        <Svg w={28} h={30} box="0 0 28 30">
          <rect x="2" y="3" width="22" height="25" rx="2" fill="#c9d3e2" stroke="#a9b6ca" />
          <path d="M8 5V3h3a2.500 2.500 0 0 1 4 0h3v3H8z" fill="#dde3ec" stroke="#9aa6b8" />
          <path d="M11 12h11l4 4v13H11z" fill="#f7f9fc" stroke="#a9b7cc" />
          <path d="M13 18h10M13 21h10M13 24h10" stroke="#c3cede" />
        </Svg>
        <span>Paste</span><span><Caret /></span>
      </BigCommand>
      <Column>
        <SmallCommand>
          <Svg w={16} h={14} box="0 0 16 14">
            <path d="m5 0 4 8M11 0 7 8" stroke="#7b8798" strokeWidth="1.500" />
            <circle cx="5" cy="10.500" r="2.300" stroke="#2f62b5" strokeWidth="1.500" />
            <circle cx="10.500" cy="10.500" r="2.300" stroke="#2f62b5" strokeWidth="1.500" />
          </Svg>
          Cut
        </SmallCommand>
        <SmallCommand>
          <Svg w={16} h={14} box="0 0 16 14">
            <path d="M1 1h6l2 2v7H1z" fill="#fff" stroke="#6e88b5" />
            <path d="M6 4h6l3 3v6H6z" fill="#dbe7f8" stroke="#4a6ea8" />
          </Svg>
          Copy
        </SmallCommand>
        <SmallCommand>
          <Svg w={16} h={14} box="0 0 16 14">
            <path d="m1 8 6-5 4 4-5 6c-2 0-2-2-5-5z" fill="#f0d06c" stroke="#a98a35" />
            <path d="m8 4 5-4 2 2-4 5z" fill="#55534f" />
          </Svg>
          Format Painter
        </SmallCommand>
      </Column>
    </RibbonGroup>

    <RibbonGroup label="Font" w={193} launcher pad="8px 0 0 3px">
      <Column $gap={7}>
        <Row>
          <Row $gap={0}>
            <Picker $w={95}><select aria-label="Font"><option>Calibri</option></select><Caret /></Picker>
            <Picker $w={42}><select aria-label="Font size"><option>11</option></select><Caret /></Picker>
          </Row>
          <Cluster $w={43}>
            <Key aria-label="Grow font">
              <Svg w={15} h={16} box="0 0 15 16"><path d="m1 14 4.500-11L10 14M3 10h5M0 14h3M8 14h4" stroke="#222" strokeWidth="1.500" /><path d="m10 4 2.500-3L15 4z" fill="#3d66b0" /></Svg>
            </Key>
            <Key aria-label="Shrink font">
              <Svg w={15} h={16} box="0 0 15 16"><path d="m2 14 3.500-8L9 14M4 11h4M1 14h2M7 14h3" stroke="#222" strokeWidth="1.400" /><path d="m9 1 2.500 3L14 1z" fill="#3d66b0" /></Svg>
            </Key>
          </Cluster>
        </Row>
        <Row>
          <Cluster $w={78}>
            <Key aria-label="Bold"><b>B</b></Key>
            <Key aria-label="Italic"><i>I</i></Key>
            <Key aria-label="Underline" $drop><u>U</u><Caret /></Key>
          </Cluster>
          <Cluster $w={33}>
            <Key aria-label="Borders" $drop>
              <Svg w={14} h={14} box="0 0 14 14"><path d="M.500 0v13M6.500 0v13M13 0v13M0 .500h14M0 6.500h14" stroke="#8a96a8" strokeDasharray="1 1" /><path d="M0 13h14" stroke="#222" strokeWidth="1.500" /></Svg>
              <Caret />
            </Key>
          </Cluster>
          <Cluster $w={66}>
            <Key aria-label="Fill colour" $drop>
              <Svg w={17} h={17} box="0 0 17 17"><path d="m2 7 5-5 6 5-5 5z" fill="#e9f0fa" stroke="#4c6a9c" /><path d="M13 6c2 1 2 3 2 5" stroke="#3768c4" strokeWidth="2" /><path d="M0 13h15v3.500H0z" fill="#ff0" /></Svg>
              <Caret />
            </Key>
            <Key aria-label="Font colour" $drop>
              <Svg w={17} h={17} box="0 0 17 17"><path d="m3 11 5-10 5 10M5 8h6M2 11h3M11 11h3" stroke="#3c5f9e" strokeWidth="1.500" /><path d="M0 13h15v3.500H0z" fill="#e80000" /></Svg>
              <Caret />
            </Key>
          </Cluster>
        </Row>
      </Column>
    </RibbonGroup>

    <RibbonGroup label="Alignment" w={246} launcher pad="8px 0 0 3px" gap={4}>
      <Column $gap={7}>
        <Row>
          <Cluster $w={67}>
            <Key aria-label="Top"><Bars top={2} rows={[[1, 14], [3, 10], [1, 14], [3, 10]]} /></Key>
            <Key aria-label="Middle"><Bars top={4} rows={[[1, 14], [3, 10], [1, 14], [3, 10]]} /></Key>
            <Key aria-label="Bottom" $on><Bars top={7} rows={[[1, 14], [3, 10], [1, 14], [3, 10]]} /></Key>
          </Cluster>
          <Cluster $w={31}>
            <Key aria-label="Orientation" $drop>
              <Svg w={15} h={14} box="0 0 15 14"><path d="m1 5 4-3M3 8l5-6M5 10l5-6M6 12l8-8M14 8V4h-4" stroke="#333" strokeWidth="1.300" /></Svg>
              <Caret />
            </Key>
          </Cluster>
        </Row>
        <Row>
          <Cluster $w={67}>
            <Key aria-label="Left"><Bars rows={[[1, 14], [1, 10], [1, 14], [1, 9], [1, 14], [1, 9]]} /></Key>
            <Key aria-label="Centre"><Bars rows={[[1, 14], [3, 10], [1, 14], [3, 10], [1, 14], [3, 10]]} /></Key>
            <Key aria-label="Right"><Bars rows={[[1, 14], [5, 10], [1, 14], [6, 9], [1, 14], [6, 9]]} /></Key>
          </Cluster>
          <Cluster $w={44}>
            <Key aria-label="Decrease indent"><Bars accent rows={[[1, 14], [8, 7], [8, 5], [8, 7], [8, 5], [1, 14]]} /></Key>
            <Key aria-label="Increase indent"><Bars accent rows={[[1, 14], [8, 7], [8, 5], [8, 7], [8, 5], [1, 14]]} /></Key>
          </Cluster>
        </Row>
      </Column>
      <Divider />
      <Column $gap={7}>
        <SmallCommand>
          <Svg w={15} h={15} box="0 0 15 15">
            <path d="M0 1.500h15" stroke="#6a7c98" strokeWidth="2" /><path d="M1 6.500h8v6H1z" fill="#fff" stroke="#6a7c98" /><path d="M2 9h6" stroke="#d08a4a" /><path d="M10 7h4v3h-3" stroke="#c76f2c" strokeWidth="1.300" />
          </Svg>
          Wrap Text
        </SmallCommand>
        <SmallCommand>
          <Svg w={15} h={13} box="0 0 15 13">
            <path d="M.500.500h14v12H.500zM.500 3.500h14M.500 9.500h14" fill="#fff" stroke="#5d6f8c" /><path d="M2 6.500h3M10 6.500h3" stroke="#111" strokeWidth="1.500" /><path d="M6 5h3v3H6z" fill="#3c67b8" />
          </Svg>
          Merge &amp; Center <Caret />
        </SmallCommand>
      </Column>
    </RibbonGroup>

    <RibbonGroup label="Number" w={134} launcher pad="8px 0 0 3px">
      <Column $gap={7}>
        <Picker $w={126}><select aria-label="Number format"><option>General</option></select><Caret /></Picker>
        <Row>
          <Cluster $w={79}>
            <Key aria-label="Currency" $drop>
              <Svg w={16} h={16} box="0 0 16 16"><rect x="0" y="1" width="15" height="9" fill="#3f5f9f" /><circle cx="7" cy="5" r="2.500" fill="#c7d6ee" /><path d="M9 8h6v7H9zM2 12h7v3H2z" fill="#e8b838" stroke="#a77c18" strokeWidth="0.500" /></Svg>
              <Caret />
            </Key>
            <Key>%</Key>
            <Key aria-label="Comma"><b>,</b></Key>
          </Cluster>
          <Cluster $w={43}>
            <Key aria-label="Increase decimal">
              <Svg w={16} h={14} box="0 0 16 14"><path d="M1 4h5M3.500 1.500 1 4l2.500 2.500" stroke="#3a66c2" /><rect x="10.500" y="1" width="3.500" height="4.500" rx="1.500" stroke="#222" /><rect x="5.500" y="8" width="3.500" height="4.500" rx="1.500" stroke="#222" /><rect x="11" y="8" width="3.500" height="4.500" rx="1.500" stroke="#222" /><path d="M8 5.500h1M3 12.500h1" stroke="#222" /></Svg>
            </Key>
            <Key aria-label="Decrease decimal">
              <Svg w={16} h={14} box="0 0 16 14"><path d="M1 10.500h6M4.500 8 7 10.500 4.500 13" stroke="#3a66c2" /><rect x="5.500" y="1" width="3.500" height="4.500" rx="1.500" stroke="#222" /><rect x="11" y="1" width="3.500" height="4.500" rx="1.500" stroke="#222" /><rect x="11" y="8" width="3.500" height="4.500" rx="1.500" stroke="#222" /><path d="M2.500 5.500h1M8.500 12.500h1" stroke="#222" /></Svg>
            </Key>
          </Cluster>
        </Row>
      </Column>
    </RibbonGroup>

    <RibbonGroup label="Styles" w={172} pad="0 0 0 3px">
      <BigCommand $w={66}>
        <Svg w={30} h={30} box="0 0 30 30">
          <rect x="1" y="1" width="26" height="23" fill="#fff" />
          <path d="M8 1h6v6H8zM8 13h12v6H8z" fill="#e5432b" /><path d="M8 7h10v6H8zM8 19h6v5H8z" fill="#4373cf" />
          <path d="M1 1h26v23H1zM8 1v23M14 1v23M21 1v23M1 7h26M1 13h26M1 19h26" stroke="#8d9cb3" />
          <rect x="14.500" y="14.500" width="14" height="13" fill="#eef2f8" stroke="#73839c" />
          <path d="m20 17-3 2 3 2M17 23h4M17 25.500h4M26 17l-2 4M23 19h4M24 23h3M24 25.500h3" stroke="#111" />
        </Svg>
        <span>Conditional</span><span>Formatting <Caret /></span>
      </BigCommand>
      <BigCommand $w={56}><GridIcon fill="#8fb4ee" /><span>Format</span><span>as Table <Caret /></span></BigCommand>
      <BigCommand $w={42}><GridIcon fill="#8fb4ee" inner /><span>Cell</span><span>Styles <Caret /></span></BigCommand>
    </RibbonGroup>

    <RibbonGroup label="Cells" w={131} pad="0 0 0 1px">
      <BigCommand $w={42}><CellsIcon kind="insert" /><span>Insert</span><span><Caret /></span></BigCommand>
      <BigCommand $w={42}><CellsIcon kind="delete" /><span>Delete</span><span><Caret /></span></BigCommand>
      <BigCommand $w={42}>
        <Svg w={32} h={30} box="0 0 32 30">
          <path d="M2 0v3M29 0v3M4 1.500h23" stroke="#333" strokeDasharray="2 1" />
          <rect x="2" y="5" width="28" height="20" fill="#fff" stroke="#7d8ba0" />
          <path d="M9 5v20M18 5v20M25 5v20M2 10h28M2 20h28" stroke="#9aa7bb" />
          <rect x="9" y="10" width="9" height="10" fill="#4f83dc" />
          <path d="M3 27h6l2-2h6" stroke="#7d8ba0" />
        </Svg>
        <span>Format</span><span><Caret /></span>
      </BigCommand>
    </RibbonGroup>

    <RibbonGroup label="Editing" w={173} pad="0 0 0 6px">
      <Column>
        <SmallCommand>
          <Svg w={15} h={14} box="0 0 15 14"><path d="M11.500 4V2.500H3L7.500 7 3 11.500h9V10" stroke="#111" strokeWidth="1.800" /></Svg>
          AutoSum <Caret />
        </SmallCommand>
        <SmallCommand>
          <Svg w={15} h={14} box="0 0 15 14"><rect x=".500" y=".500" width="13" height="13" fill="#eff5fd" stroke="#5274aa" /><path d="M1 1h12v2H1z" fill="#4a7ad0" /><path d="M5.500 5h3v3H11l-4 4-4-4h2.500z" fill="#2f6cd0" /></Svg>
          Fill <Caret />
        </SmallCommand>
        <SmallCommand>
          <Svg w={15} h={12} box="0 0 15 12"><path d="m1 8 6-7h5l1 2-6 7H2z" fill="#fff" stroke="#666" /><path d="M4 11h9" stroke="#222" /></Svg>
          Clear <Caret />
        </SmallCommand>
      </Column>
      <BigCommand $w={48}>
        <Svg w={32} h={30} box="0 0 32 30">
          <path d="m3 12 4-11 4 11M4.500 8.500h5" stroke="#3c65b0" strokeWidth="2" />
          <path d="M4 16h8L4 26h8" stroke="#a8323a" strokeWidth="2" />
          <path d="M12 6h18l-7 9v8l-5 3V15z" fill="#a9a9a5" stroke="#777" />
        </Svg>
        <span>Sort &amp;</span><span>Filter <Caret /></span>
      </BigCommand>
      <BigCommand $w={38}>
        <Svg w={28} h={30} box="0 0 28 30">
          <path d="M5 4h6v8h6V4h6l3 10v11h-9v-8h-6v8H2V14z" fill="#5a78b4" />
          <path d="M7 1h3v5H7zM18 1h3v5h-3z" fill="#8aa3d3" />
          <path d="M4 15v9M7 15v9M19 15v9M22 15v9" stroke="#bccbe8" />
          <path d="M1 14h10M17 14h10" stroke="#2e4678" />
        </Svg>
        <span>Find &amp;</span><span>Select <Caret /></span>
      </BigCommand>
    </RibbonGroup>
  </Ribbon>
);

const QuickBar = styled.div`
  display: flex;
  align-items: center;
  gap: 6px;
  height: 27px;
  padding: 0 5px 2px;
  border-top: 3px solid #94b4de;
  background: linear-gradient(#b6cff1, #a8c4ea);
`;

const FormulaBar = styled.div`
  display: flex;
  align-items: center;
  height: 25px;
  border: 1px solid #6f93bf;
  border-bottom: 4px solid #d6e5f7;
  background: #fff;
  color: #111;
  font-size: 12px;
`;

const NameBox = styled.label`
  display: flex;
  align-items: center;
  width: 370px;
  padding-right: 6px;
  input { flex: 1; min-width: 0; height: 20px; text-align: center; }
`;

const FxWell = styled.span`
  display: flex;
  align-items: center;
  justify-content: space-between;
  width: 83px;
  height: 20px;
  padding: 0 6px 0 3px;
  border: 1px solid #6f93bf;
  border-width: 0 1px 0 1px;
  border-radius: 10px 0 0 10px;
  background: linear-gradient(#dfe9f7, #a9c3e6);
  i { font: italic 14px "Liberation Serif", serif; color: #333; }
`;

const Dot = styled.span`
  width: 9px;
  height: 9px;
  border-radius: 50%;
  background: radial-gradient(circle at 60% 60%, #e8edf5, #9fb2cf);
`;

const FormulaInput = styled.input`
  flex: 1;
  min-width: 0;
  height: 20px;
  padding-left: 7px;
`;

const ExpandKey = styled.button`
  display: grid;
  place-items: center;
  width: 15px;
  height: 20px;
  border: 1px solid #7f9dc6;
  background: linear-gradient(#eef4fc, #b9cfed);
`;

const SheetArea = styled.div`
  display: flex;
  position: relative;
  height: 490px;
  border-top: 1px solid #7596c0;
  background: #b9d2f2;
`;

const SheetClip = styled.div`
  flex: 1;
  min-width: 0;
  overflow: hidden;
  background: #fff;
`;

const Sheet = styled.table`
  width: 100%;
  table-layout: fixed;
  border-collapse: separate;
  border-spacing: 0;
  color: #111;
  font-size: 13px;
  th, td { height: 20px; padding: 0; line-height: 19px; white-space: nowrap; }
  tbody tr:nth-child(3n) > * { height: 19px; line-height: 18px; }
`;

const ColHead = styled.th<{ $on?: boolean }>`
  border-right: 1px solid #9eb6ce;
  border-bottom: 1px solid #9eb6ce;
  background: linear-gradient(#f6f9fc, #d3dbe8);
  color: #27413e;
  font-size: 12px;
  font-weight: 400;
  ${(p) => p.$on && css`background: linear-gradient(#f8d08a, #f1bd5b); border-color: #f29536;`}
`;

const Corner = styled.th`
  border-right: 1px solid #9eb6ce;
  border-bottom: 1px solid #9eb6ce;
  background: linear-gradient(135deg, #a9c4e9 62%, #dfe9f6 62%);
`;

const RowHead = styled.th<{ $on?: boolean }>`
  border-right: 1px solid #9eb6ce;
  border-bottom: 1px solid #9eb6ce;
  background: #e4ecf7;
  color: #27413e;
  font-size: 12px;
  font-weight: 400;
  ${(p) => p.$on && css`background: #ffd58d; border-color: #f29536;`}
`;

const Cell = styled.td<{ $fill?: boolean; $picked?: boolean }>`
  position: relative;
  border-right: 1px solid #d0d7e5;
  border-bottom: 1px solid #d0d7e5;
  && { padding-left: 2px; }
  a { color: #0000c8; }
  ${(p) => p.$fill && css`background: #ff0; border-color: #ff0;`}
  ${(p) => p.$picked && css`
    z-index: 1;
    &::before {
      content: "";
      position: absolute;
      inset: -2px;
      border: 3px solid #111;
    }
    &::after {
      content: "";
      position: absolute;
      right: -4px;
      bottom: -4px;
      width: 6px;
      height: 6px;
      border: 1px solid #fff;
      border-width: 1px 0 0 1px;
      background: #111;
    }
  `}
`;

const CrossCursor = styled.span`
  position: absolute;
  left: 966px;
  top: 76px;
`;

const widths = [63, 62, 136, 112, 91, 72, 71, 63, 63, 63, 63, 63, 63, 63, 63, 63, 63];
const letters = "ABCDEFGHIJKLMNOPQR".split("");

type Entry = { t: string; span?: number; fill?: boolean; link?: boolean };
const cells: Record<string, Entry> = {
  E1: { t: "Tenant" }, E2: { t: "PIL001" }, K3: { t: "UserID" },
  B4: { t: "User" }, D4: { t: "Application" }, E4: { t: "Data Platform", fill: true }, F4: { t: "A001" }, G4: { t: "Login" }, H4: { t: "R1 , R2" }, K4: { t: "Pwd" },
  E5: { t: "Optics" }, F5: { t: "A002" }, G5: { t: "Login" }, H5: { t: "R3,R4" }, K5: { t: "Role" },
  L6: { t: "A001" },
  D7: { t: "Business Funcion" }, E7: { t: "Admin" }, F7: { t: "A001_B001" },
  E8: { t: "Admin" }, F8: { t: "A002_B001" }, L8: { t: "Page Laod", fill: true }, M8: { t: "GetRoleDetail", span: 2 }, O8: { t: "A001 (Config of Applciation)", span: 3 },
  D10: { t: "Business Module" },
  E11: { t: "M001" }, F11: { t: "A001_B001" }, K11: { t: "Use Authetucation", span: 2 }, N11: { t: "User ID" },
  E12: { t: "M002" }, F12: { t: "A002_B001" }, N12: { t: "PWD" },
  D14: { t: "Feature" }, E14: { t: "F001" }, F14: { t: "M001" }, G14: { t: "A001_B001" },
  E15: { t: "F002" }, F15: { t: "M002" }, G15: { t: "A002_B001" }, K15: { t: "Rest all fetures are Application Specifc", span: 4 },
  D17: { t: "Componene" }, E17: { t: "C1" },
  C21: { t: "Agoel@Proclink.com", link: true }, D21: { t: "Role" }, E21: { t: "R1" }, F21: { t: "A001" },
  C22: { t: "Agoel@Proclink.com", link: true }, E22: { t: "R2" }, F22: { t: "A002" },
  C23: { t: "agoel@ril.com", link: true },
};

const SheetRow = ({ n }: { n: number }) => {
  const out: React.ReactNode[] = [];
  for (let i = 0; i < letters.length; i++) {
    const key = letters[i] + n;
    const e = cells[key];
    out.push(
      <Cell key={key} colSpan={e?.span} $fill={e?.fill} $picked={key === "E2"}>
        {e?.link ? <a href={`mailto:${e.t}`}>{e.t}</a> : e?.t}
      </Cell>
    );
    if (e?.span) i += e.span - 1;
  }
  return <tr><RowHead scope="row" $on={n === 2}>{n}</RowHead>{out}</tr>;
};

const VScroll = styled.div`
  display: flex;
  flex-direction: column;
  align-items: center;
  width: 15px;
  margin-right: 4px;
  padding-bottom: 5px;
  background: #7c9bc5;
  > svg:last-child { margin-top: auto; }
`;

const SplitBox = styled.span<{ $v?: boolean }>`
  flex: none;
  width: ${(p) => (p.$v ? 6 : 15)}px;
  height: ${(p) => (p.$v ? 15 : 7)}px;
  border: 1px solid #6285b5;
  background: #f1f6fc;
`;

const Thumb = styled.div<{ $h?: boolean }>`
  display: grid;
  place-items: center;
  flex: none;
  ${(p) => (p.$h ? "width: 421px; height: 14px;" : "width: 14px; height: 409px;")}
  border: 1px solid #5d7ca9;
  border-radius: 2px;
  background: linear-gradient(${(p) => (p.$h ? "180deg" : "90deg")}, #eef3f9, #cbd6e6 50%, #b6c4d8);
`;

const SheetBar = styled.div`
  display: flex;
  align-items: center;
  height: 17px;
  padding-right: 20px;
  background: linear-gradient(#86a5d3, #9db8df);
  border-bottom: 1px solid #4f73a8;
  font-size: 12px;
`;

const NavKeys = styled.div`
  display: flex;
  align-items: center;
  justify-content: space-around;
  width: 62px;
  height: 16px;
  padding: 0 3px;
  background: #c9dcf5;
`;

const SheetTab = styled.button<{ $on?: boolean; $w: number }>`
  position: relative;
  z-index: ${(p) => (p.$on ? 1 : 0)};
  width: ${(p) => p.$w}px;
  height: 16px;
  line-height: 15px;
  color: #1f3f7a;
  font-weight: ${(p) => (p.$on ? 700 : 400)};
  isolation: isolate;
  &::before {
    content: "";
    position: absolute;
    inset: 0 0 0 2px;
    z-index: -1;
    border-right: 1px solid #6a8cc0;
    background: ${(p) => (p.$on ? "#fff" : "#c5daf5")};
    transform: skewX(-32deg);
  }
  svg { margin: 0 auto; }
`;

const HScroll = styled.div`
  display: flex;
  align-items: center;
  gap: 6px;
  width: 526px;
  height: 16px;
  margin-left: auto;
  background: #7c9bc5;
  > svg:nth-last-child(2) { margin-left: auto; }
`;

const StatusBar = styled.footer`
  display: flex;
  align-items: center;
  height: 21px;
  padding: 0 5px 0 7px;
  background: linear-gradient(#dbe8fa, #b4cff3 45%, #c9ddf8);
  color: #15316b;
  > span:first-child { width: 40px; border-right: 1px solid #8fb0dd; line-height: 20px; }
`;

const ViewKeys = styled.div`
  display: flex;
  margin-left: auto;
  padding: 0 1px;
  border: 1px solid #8aa8d4;
  height: 19px;
  button { display: grid; place-items: center; width: 18px; }
  button:first-child { background: #fbd58b; }
`;

const ZoomLabel = styled.label`
  padding: 0 8px;
`;

const ZoomSlider = styled.input`
  appearance: none;
  width: 100px;
  height: 14px;
  background: linear-gradient(#6d8fc4, #6d8fc4) center / 100% 1px no-repeat;
  &::-webkit-slider-thumb {
    appearance: none;
    width: 9px;
    height: 13px;
    border: 1px solid #5575a8;
    border-radius: 1px 1px 5px 5px;
    background: #e8f0fb;
  }
`;

const ZoomKey = ({ plus }: { plus?: boolean }) => (
  <button aria-label={plus ? "Zoom in" : "Zoom out"}>
    <Svg w={16} box="0 0 16 16">
      <circle cx="8" cy="8" r="7" fill="#e4eefb" stroke="#5f7fb1" />
      <path d={plus ? "M4 8h8M8 4v8" : "M4 8h8"} stroke="#333" strokeWidth="1.800" />
    </Svg>
  </button>
);

const Glyph = ({ d, w = 8, h = 8 }: { d: string; w?: number; h?: number }) => (
  <Svg w={w} h={h} box={`0 0 ${w} ${h}`}><path d={d} fill="#33507f" /></Svg>
);

/* ---------- remote taskbar ---------- */

const RemoteBar = styled.footer`
  display: flex;
  align-items: center;
  height: 37px;
  background: #1c2a36;
  color: #fff;
  font-size: 12px;
  line-height: 18px;
`;

const StartTen = styled.button`
  display: grid;
  place-items: center;
  width: 47px;
  height: 37px;
`;

const SearchTen = styled.label`
  display: flex;
  align-items: center;
  gap: 10px;
  width: 283px;
  height: 37px;
  margin-right: 3px;
  padding: 0 9px 0 11px;
  background: #f2f2f2;
  color: #222;
  input { flex: 1; min-width: 0; background: none; font-size: 14px; }
  input::placeholder { color: #333; opacity: 1; }
`;

const AppTen = styled.button<{ $on?: boolean }>`
  display: grid;
  place-items: center;
  width: 48px;
  height: 37px;
  background: ${(p) => (p.$on ? "#455461" : "transparent")};
`;

const RemoteTray = styled.div`
  display: flex;
  align-items: center;
  gap: 9px;
  margin-left: auto;
  padding-right: 23px;
`;

const Clock = styled.time<{ $align: string }>`
  display: flex;
  flex-direction: column;
  text-align: ${(p) => p.$align};
  white-space: nowrap;
`;

const Notice = styled.button`
  margin-left: 4px;
`;

const Medal = () => (
  <Svg w={62} h={37} box="0 0 62 37">
    <circle cx="17" cy="19" r="17" fill="#a58a45" />
    <circle cx="17" cy="19" r="15" fill="#bfa55c" />
    <path d="M13 33c0-4-3-5-2-8 0-2-3-2-2-4l2-4c0-6 4-9 9-8 5 2 6 7 4 11 0 4 4 8 5 11-4 4-11 5-16 2z" fill="#8a7135" />
    <path d="M14 14c2-3 6-3 8 0M13 20h4M14 25c3 2 6 1 8-2" stroke="#d9c483" />
    <path d="m42 3 18 1-2 20-16-2z" fill="#3f4c88" />
    <path d="m45 6 12 1-1 14-12-1z" fill="#d8cfc8" />
    <path d="m36 26 7-4 15 2-2 10-18-3z" fill="#343f77" />
    <path d="m38 26 5-3 12 2-2 6-13-2z" fill="#d6cdc6" />
    <ellipse cx="46" cy="27" rx="5" ry="3" fill="#aaa096" />
  </Svg>
);

const RemoteTaskbar = () => (
  <RemoteBar>
    <StartTen aria-label="Start"><WindowsTen /></StartTen>
    <SearchTen>
      <Line w={18} h={18} box="0 0 18 18"><circle cx="11" cy="7" r="5.500" /><path d="m7 11-5.500 5.500" /></Line>
      <input aria-label="Type here to search" placeholder="Type here to search" />
      <Medal />
    </SearchTen>
    <AppTen aria-label="MySQL Workbench"><MySqlLogo /></AppTen>
    <AppTen aria-label="Outlook"><OutlookLogo size={24} /></AppTen>
    <AppTen aria-label="Mail"><MailClockLogo /></AppTen>
    <AppTen aria-label="Explorer"><SmallFolder /></AppTen>
    <AppTen aria-label="Database tools"><DbToolLogo /></AppTen>
    <AppTen aria-label="Server"><ServerPlayLogo /></AppTen>
    <AppTen aria-label="Visual Studio Code"><CodeLogo size={24} /></AppTen>
    <AppTen aria-label="Edge"><EdgeLogo size={24} /></AppTen>
    <AppTen aria-label="Firefox"><FirefoxLogo /></AppTen>
    <AppTen aria-label="Management Studio"><DbWrenchLogo /></AppTen>
    <AppTen aria-label="Teams"><TeamsLogo size={24} /></AppTen>
    <AppTen aria-label="Cloud"><CloudCheckLogo /></AppTen>
    <AppTen aria-label="Chrome"><ChromeLogo size={24} /></AppTen>
    <AppTen aria-label="Teams meeting"><TeamsBusyLogo /></AppTen>
    <AppTen aria-label="Excel" $on><ExcelLogo /></AppTen>
    <RemoteTray>
      <Line w={13} h={12} box="0 0 13 12"><path d="m1 9 5.500-6L12 9" /></Line>
      <Svg w={15} h={16} box="0 0 15 16">
        <path d="M7 0c2 1.500 4 2 7 2v5c0 4-3 7-7 8-4-1-7-4-7-8V2c3 0 5-.500 7-2z" fill="#fff" />
        <path d="M7 0v15M0 7h14" stroke="#1c2a36" />
        <circle cx="10.500" cy="11.500" r="4.500" fill="#16a34a" /><path d="m8.500 11.500 1.500 1.500 2.500-3" stroke="#fff" />
      </Svg>
      <Svg w={16} h={12} box="0 0 16 12"><path d="M5 3.500h9.500v7H4V7" stroke="#fff" /><path d="M6 5h7v4H6z" fill="#fff" /><path d="M1 0v2M4 0v2M.500 2h4v1.500a2 2 0 0 1-4 0z" fill="#fff" stroke="#fff" /></Svg>
      <Svg w={14} h={14} box="0 0 14 14"><path d="M1 13C1 6 6 1 13 1M5 13c0-5 3-8 8-8M9 13c0-2 2-4 4-4" stroke="#9fb0bd" strokeWidth="1.400" /><circle cx="12" cy="12.500" r="1.300" fill="#fff" /></Svg>
      <span>ENG</span>
      <Clock $align="center"><span>12:23 PM</span><span>07-10-2024</span></Clock>
      <Notice aria-label="Notifications">
        <Svg w={20} h={18} box="6 0 20 18">
          <path d="M8 1h16v12h-2a3 3 0 0 1-5 3l-4-2H8z" fill="#fff" />
          <path d="M10.500 4.500h11M10.500 7.500h11M10.500 10.500h7" stroke="#1c2a36" strokeWidth="1.300" />
        </Svg>
      </Notice>
    </RemoteTray>
  </RemoteBar>
);

const Spreadsheet = () => (
  <Shared aria-label="Shared screen">
    <BookTitle>
      <OfficeButton aria-label="Office menu">
        <Svg w={24} h={24} box="0 0 24 24">
          <rect x="3" y="3" width="8" height="8" rx="1.500" stroke="#d9481c" strokeWidth="3" />
          <rect x="13.500" y="7" width="6" height="6" rx="1" stroke="#3c8fd0" strokeWidth="2.200" />
          <rect x="4.500" y="14" width="6" height="6" rx="1" stroke="#f3b21e" strokeWidth="2.200" />
          <rect x="13" y="13.500" width="8" height="7" rx="1.500" stroke="#67a829" strokeWidth="2.800" />
        </Svg>
      </OfficeButton>
      <span />
      <span>Book1 - Microsoft Excel</span>
      <WindowButtons $gap={34}>
        <button aria-label="Minimise workbook"><Svg w={11} h={11} box="0 0 11 11"><path d="M0 6.500h10" stroke="currentColor" /></Svg></button>
        <button aria-label="Restore workbook"><Svg w={11} h={11} box="0 0 11 11"><path d="M.500 3.500h7v7h-7zM3 3V.500h7.500V8H8" stroke="currentColor" /></Svg></button>
        <button aria-label="Close workbook"><Svg w={11} h={11} box="0 0 11 11"><path d="m.500.500 10 10M10.500.500l-10 10" stroke="currentColor" /></Svg></button>
      </WindowButtons>
    </BookTitle>
    <TabStrip>
      <RibbonTab $on>Home</RibbonTab>
      {["Insert", "Page Layout", "Formulas", "Data", "Review", "View"].map((t) => <RibbonTab key={t}>{t}</RibbonTab>)}
      <StripTools>
        <button aria-label="Help">
          <Svg w={14} box="0 0 14 14"><circle cx="7" cy="7" r="6.500" fill="#2f62c9" stroke="#dbe8fb" /><path d="M5 5.500c0-3 4-2.500 4 0 0 1.500-2 1.500-2 3M7 10v1.200" stroke="#fff" strokeWidth="1.400" /></Svg>
        </button>
        <button aria-label="Minimise"><Svg w={9} h={9} box="0 0 9 9"><path d="M1 7.500h6" stroke="#555" strokeWidth="2" /></Svg></button>
        <button aria-label="Restore"><Svg w={10} h={9} box="0 0 10 9"><path d="M2.500 2V.500h7V6H8M.500 3h7v5h-7z" stroke="#555" /><path d="M0 2.500h8" stroke="#555" strokeWidth="1.500" /></Svg></button>
        <button aria-label="Close"><Svg w={10} h={9} box="0 0 10 9"><path d="m1 1 8 7.500M9 1 1 8.500" stroke="#555" strokeWidth="1.800" /></Svg></button>
      </StripTools>
    </TabStrip>
    <RibbonBar />
    <QuickBar>
      <Svg w={14} h={14} box="0 0 14 14"><path d="M0 0h14v14H0z" fill="#3f43a0" /><path d="M3 0h8v6H3z" fill="#e7eaf7" /><path d="M4 9h6v5H4z" fill="#ccd3ee" /><path d="M8 10h1v3H8z" fill="#222" /></Svg>
      <Svg w={14} h={12} box="0 0 14 12"><path d="M3 5c5-4 10 0 5 6" stroke="#3566c9" strokeWidth="2.200" /><path d="M0 1v7h7z" fill="#3566c9" /></Svg>
      <Caret />
      <Svg w={14} h={12} box="0 0 14 12"><path d="M11 5C6 1 1 5 6 11" stroke="#9fb1cd" strokeWidth="2" /><path d="M13 1v7H7z" fill="#9fb1cd" /></Svg>
      <Caret color="#8fa4c4" />
      <span />
      <Svg w={7} h={8} box="0 0 7 8"><path d="M1 1h5" stroke="#223f75" strokeWidth="1.500" /><path d="M0 4h7L3.500 8z" fill="#223f75" /></Svg>
    </QuickBar>
    <FormulaBar>
      <NameBox>
        <input aria-label="Name box" defaultValue="E2" />
        <Svg w={8} h={4} box="0 0 8 4"><path d="M0 0h8L4 4z" fill="#111" /></Svg>
      </NameBox>
      <FxWell><Dot /><i>fx</i></FxWell>
      <FormulaInput aria-label="Formula" defaultValue="PIL001" />
      <ExpandKey aria-label="Expand formula bar">
        <Svg w={8} h={10} box="0 0 8 10"><path d="m1 1 3 3 3-3M1 5l3 3 3-3" stroke="#111" strokeWidth="1.500" /></Svg>
      </ExpandKey>
    </FormulaBar>
    <SheetArea>
      <SheetClip>
        <Sheet>
          <colgroup>
            <col style={{ width: 26 }} />
            {widths.map((w, i) => <col key={i} style={{ width: w }} />)}
            <col />
          </colgroup>
          <thead>
            <tr>
              <Corner aria-label="Select all" />
              {letters.map((l) => <ColHead key={l} scope="col" $on={l === "E"}>{l}</ColHead>)}
            </tr>
          </thead>
          <tbody>{Array.from({ length: 24 }, (_, i) => <SheetRow key={i} n={i + 1} />)}</tbody>
        </Sheet>
      </SheetClip>
      <VScroll>
        <SplitBox />
        <Svg w={9} h={17} box="0 0 9 17"><path d="M0 11h9L4.500 6z" fill="#2f4874" /></Svg>
        <Thumb><Svg w={8} h={8} box="0 0 8 8"><path d="M0 1h8M0 3h8M0 5h8M0 7h8" stroke="#6e7f99" /></Svg></Thumb>
        <Svg w={9} h={5} box="0 0 9 5"><path d="M0 0h9L4.500 5z" fill="#2f4874" /></Svg>
      </VScroll>
      <CrossCursor>
        <Svg w={16} box="0 0 16 16"><path d="M5.500 1.500h5v4h4v5h-4v4h-5v-4h-4v-5h4z" fill="#fff" stroke="#111" strokeWidth="1.600" /></Svg>
      </CrossCursor>
    </SheetArea>
    <SheetBar>
      <NavKeys>
        <button aria-label="First sheet"><Glyph d="M1 0h1.500v8H1zM7 0v8L3 4z" /></button>
        <button aria-label="Previous sheet"><Glyph d="M6 0v8L2 4z" /></button>
        <button aria-label="Next sheet"><Glyph d="M2 0v8l4-4z" /></button>
        <button aria-label="Last sheet"><Glyph d="M5.500 0H7v8H5.500zM1 0v8l4-4z" /></button>
      </NavKeys>
      <SheetTab $w={59} $on>Sheet1</SheetTab>
      <SheetTab $w={59}>Sheet2</SheetTab>
      <SheetTab $w={59}>Sheet3</SheetTab>
      <SheetTab $w={37} aria-label="New sheet">
        <Svg w={15} h={13} box="0 0 15 13"><path d="M5 3h9v6l-3 3H7" fill="#fff" stroke="#5a78ab" /><circle cx="3.500" cy="3.500" r="3" fill="#f1b53f" /></Svg>
      </SheetTab>
      <HScroll>
        <SplitBox $v />
        <Glyph w={5} d="M5 0v8L0 4z" />
        <Thumb $h><Svg w={8} h={8} box="0 0 8 8"><path d="M1 0v8M3 0v8M5 0v8M7 0v8" stroke="#6e7f99" /></Svg></Thumb>
        <Glyph w={5} d="M0 0v8l5-4z" />
        <SplitBox $v />
      </HScroll>
    </SheetBar>
    <StatusBar>
      <span>Ready</span>
      <ViewKeys>
        <button aria-label="Normal"><Svg w={13} box="0 0 13 13"><path d="M.500.500h12v12H.500zM4.500 0v13M8.500 0v13M0 4.500h13M0 8.500h13" fill="#fff" stroke="#5e5536" /></Svg></button>
        <button aria-label="Page layout"><Svg w={13} box="0 0 13 13"><path d="M.500.500h12v12H.500z" fill="#8d99ab" stroke="#555" /><path d="M3 2h7v9H3z" fill="#fff" /><path d="M4 4h5M4 6h5M4 8h5" stroke="#555" /></Svg></button>
        <button aria-label="Page break"><Svg w={13} box="0 0 13 13"><path d="M.500.500h12v12H.500z" fill="#8d99ab" stroke="#555" /><path d="M2 1h3v7H2zM6 1h3v7H6z" fill="#fff" /></Svg></button>
      </ViewKeys>
      <ZoomLabel htmlFor="zoom">100%</ZoomLabel>
      <ZoomKey />
      <ZoomSlider id="zoom" type="range" min="0" max="100" defaultValue="50" />
      <ZoomKey plus />
    </StatusBar>
    <RemoteTaskbar />
  </Shared>
);

/* ---------- local taskbar ---------- */

const Taskbar = styled.footer`
  display: grid;
  grid-template-columns: 1fr auto 1fr;
  align-items: center;
  height: 59px;
  border-top: 1px solid #b8b5a0;
  background: linear-gradient(90deg, #eedfc8, #ede2b6 8%, #ecdfc6 16%, #f0dfc9 21%, #eee3be 25%, #dde6cc 30%, #e0e6d0 37%, #d0e4e0 47%, #cde6de 65%, #d4eacb 71%, #cfe8d8 81%, #cfe9cc 84%, #dde7be 90%, #d0e8d4 95%, #dcebb4);
  color: #1b1b1b;
  font-size: 15px;
  line-height: 20px;
`;

const Weather = styled.button`
  display: flex;
  align-items: center;
  gap: 7px;
  position: relative;
  margin-left: 24px;
  padding-bottom: 2px;
  text-align: left;
  small { display: block; font-size: 15px; color: #5f5c50; }
`;

const WeatherBadge = styled.span`
  display: grid;
  place-items: center;
  position: absolute;
  left: 12px;
  top: -1px;
  width: 20px;
  height: 20px;
  border-radius: 50%;
  background: #c42b1c;
  color: #fff;
  font-size: 12px;
`;

const Dock = styled.div`
  display: flex;
  align-items: center;
  padding-left: 10px;
`;

const DockApp = styled.button<{ $on?: boolean; $dot?: boolean }>`
  display: grid;
  place-items: center;
  position: relative;
  width: 47px;
  height: 48px;
  margin: 0 4px;
  border-radius: 5px;
  ${(p) => p.$on && css`background: rgba(255, 255, 255, 0.6); box-shadow: 0 0 0 1px rgba(0, 0, 0, 0.06);`}
  ${(p) => (p.$on || p.$dot) && css`
    &::after {
      content: "";
      position: absolute;
      bottom: 1px;
      width: ${p.$on ? 20 : 8}px;
      height: 3px;
      border-radius: 2px;
      background: ${p.$on ? "#0a78d4" : "#7c8886"};
    }
  `}
`;

const RedDot = styled.span`
  position: absolute;
  right: 3px;
  top: 3px;
  width: 20px;
  height: 20px;
  border-radius: 50%;
  background: #d13438;
`;

const SearchEleven = styled.label`
  display: flex;
  align-items: center;
  gap: 12px;
  width: 272px;
  height: 39px;
  margin: 0 6px 0 17px;
  padding: 0 2px 0 14px;
  border: 1px solid #c9cdb9;
  border-radius: 20px;
  background: #f6f8f0;
  color: #1b1b1b;
  input { flex: 1; min-width: 0; background: none; font-size: 16px; }
  input::placeholder { color: #666; opacity: 1; }
`;

const Brand = styled.span`
  display: flex;
  align-items: center;
  justify-content: center;
  gap: 1px;
  width: 66px;
  height: 33px;
  border-radius: 16px;
  background: #111;
  color: #e8611c;
  font: 6px "DejaVu Sans", sans-serif;
`;

const Tray = styled.div`
  display: flex;
  align-items: center;
  justify-self: end;
  padding-right: 16px;
  > time { margin-left: 10px; padding-bottom: 2px; }
`;

const TrayIcon = styled.button<{ $w: number; $on?: boolean }>`
  display: grid;
  place-items: center;
  width: ${(p) => p.$w}px;
  height: 49px;
  border-radius: 5px;
  background: ${(p) => (p.$on ? "rgba(255, 255, 255, 0.55)" : "transparent")};
`;

const LocalTaskbar = () => (
  <Taskbar>
    <div>
      <Weather>
        <Svg w={30} h={34} box="0 0 30 34">
          <circle cx="13" cy="19" r="13" fill="#f59a1b" />
          <path d="M13 29a5 5 0 0 1 1-9 6 6 0 0 1 11 1 4 4 0 0 1 1 8z" fill="#c2d8f6" />
        </Svg>
        <WeatherBadge>1</WeatherBadge>
        <span>30°C<small>Mostly sunny</small></span>
      </Weather>
    </div>
    <Dock>
      <button aria-label="Start"><WindowsEleven /></button>
      <SearchEleven>
        <Line w={19} h={20} box="0 0 19 20"><circle cx="8" cy="8" r="6.500" strokeWidth="1.900" /><path d="m13 13 5 5.500" strokeWidth="2.200" /></Line>
        <input aria-label="Search" placeholder="Search" />
        <Brand>
          <Svg w={8} box="0 0 8 8"><circle cx="4" cy="4" r="3.300" stroke="#e8611c" /><circle cx="4" cy="4" r="1.300" stroke="#e8611c" /></Svg>
          proclink
        </Brand>
      </SearchEleven>
      <DockApp aria-label="Task view">
        <Svg w={28} h={28} box="0 0 28 28"><rect x="1" y="9" width="17" height="18" fill="#2a2a2a" /><rect x="7" y="2" width="19" height="18" fill="#efefef" stroke="#c9cfca" /><rect x="7" y="9" width="11" height="11" fill="#b4b4b4" /></Svg>
      </DockApp>
      <DockApp aria-label="Explorer"><FolderLogo size={32} /></DockApp>
      <DockApp aria-label="Outlook"><OutlookLogo size={31} /></DockApp>
      <DockApp aria-label="Chrome"><ChromeLogo size={32} /></DockApp>
      <DockApp aria-label="Edge" $dot><EdgeLogo size={31} bag /></DockApp>
      <DockApp aria-label="Visual Studio Code" $dot><CodeLogo size={30} /></DockApp>
      <DockApp aria-label="Visual Studio" $dot><VisualStudioLogo size={30} /></DockApp>
      <DockApp aria-label="Teams" $on><TeamsLogo size={30} /><RedDot /></DockApp>
    </Dock>
    <Tray>
      <TrayIcon $w={40} aria-label="Show hidden icons"><Line w={14} h={10} box="0 0 14 10"><path d="m1 8 6-6 6 6" strokeWidth="1.700" /></Line></TrayIcon>
      <TrayIcon $w={40} aria-label="Cloud sync off">
        <Svg w={21} h={16} box="0 0 21 16">
          <path d="M5 14a4 4 0 0 1-.500-8 6 6 0 0 1 11-1A4.500 4.500 0 0 1 16 14z" fill="#b9b9bd" stroke="#222" strokeWidth="1.500" />
          <path d="m3 0 16 16" stroke="#222" strokeWidth="1.600" />
        </Svg>
      </TrayIcon>
      <TrayIcon $w={40} $on aria-label="Microphone muted">
        <Svg w={21} box="0 0 24 24">
          <rect x="8" y="1" width="8.500" height="14" rx="4.250" fill="#222" />
          <path d="M5 11a7 7 0 0 0 14 0M12 18v5" stroke="#222" strokeWidth="1.700" />
          <path d="m3.500.500 20 20" stroke="#eef5e4" strokeWidth="1.500" />
          <path d="m2 2 21 20" stroke="#222" strokeWidth="1.700" />
        </Svg>
      </TrayIcon>
      <TrayIcon $w={40} aria-label="Wi-Fi">
        <Line w={20} h={16} box="0 0 20 16"><path d="M1 6c5-6 13-6 18 0M4 9.500c3.500-4 8.500-4 12 0M7 12.500c2-2 4-2 6 0" strokeWidth="1.600" /><circle cx="10" cy="14.500" r="1" fill="#1b1b1b" /></Line>
      </TrayIcon>
      <TrayIcon $w={20} aria-label="Volume">
        <Line w={20} h={16} box="0 0 20 16"><path d="M1 5.500h3l4.500-4v13L4 10.500H1z" /><path d="M11.500 5q2 3 0 6" /><path d="M14 3q3.500 5 0 10M16.500 1q4.500 7 0 14" stroke="#a9b39a" /></Line>
      </TrayIcon>
      <TrayIcon $w={40} aria-label="Battery">
        <Svg w={20} h={16} box="0 0 20 16"><rect x="2" y="4" width="14.500" height="11" rx="2.500" stroke="#222" strokeWidth="1.500" /><rect x="4" y="6" width="10.500" height="7" rx="1" fill="#222" /><path d="M17 7.500h2.500v4H17z" fill="#222" /><path d="M4 0 0 6h3l-1 4 4-6H3.500z" fill="#222" stroke="#e0e8c4" strokeWidth="0.500" /></Svg>
      </TrayIcon>
      <Clock $align="right"><span>12:23</span><span>07-10-2024</span></Clock>
      <TrayIcon $w={36} aria-label="Notifications">
        <Line w={18} h={20} box="0 0 18 20"><path d="M1 15h16l-2-3V8A6 6 0 0 0 3 8v4zM6.500 17.500c1 1.500 4 1.500 5 0" strokeWidth="1.500" /></Line>
      </TrayIcon>
    </Tray>
  </Taskbar>
);

export default function App() {
  return (
    <Page>
      <GlobalStyle />
      <TitleBar>
        <TeamsLogo size={18} />
        <h1>Internal Lab-Standup call</h1>
        <WindowButtons $gap={38}>
          <button aria-label="More options"><Svg w={18} h={12} box="0 0 24 12"><g fill="#444"><circle cx="4" cy="6" r="2" /><circle cx="12" cy="6" r="2" /><circle cx="20" cy="6" r="2" /></g></Svg></button>
          <TitleRule />
          <button aria-label="Minimise"><Svg w={12} h={12} box="0 0 12 12"><path d="M0 6.500h12" stroke="currentColor" /></Svg></button>
          <button aria-label="Restore"><Svg w={12} h={12} box="0 0 12 12"><path d="M.500 5a2 2 0 0 1 2-2H7a2 2 0 0 1 2 2v5a2 2 0 0 1-2 2H2.500a2 2 0 0 1-2-2zM3 1.500Q4 .500 5 .500h3.500a3 3 0 0 1 3 3V8q0 1-1 2" stroke="currentColor" /></Svg></button>
          <button aria-label="Close"><Svg w={12} h={12} box="0 0 12 12"><path d="m0 0 12 12M12 0 0 12" stroke="currentColor" /></Svg></button>
        </WindowButtons>
      </TitleBar>
      <CallToolbar />
      <Participants />
      <Stage>
        <Spreadsheet />
        <Presenter>
          <PresenterPill $w={91}>Ankush Goel</PresenterPill>
          <PresenterPill $w={76}>
            <button aria-label="Zoom out"><Svg w={14} box="0 0 14 14"><path d="M0 7h14" stroke="#a8a8a8" /></Svg></button>
            <button aria-label="Zoom in"><Svg w={14} box="0 0 14 14"><path d="M0 7h14M7 0v14" stroke="#fff" /></Svg></button>
          </PresenterPill>
        </Presenter>
      </Stage>
      <LocalTaskbar />
    </Page>
  );
}
